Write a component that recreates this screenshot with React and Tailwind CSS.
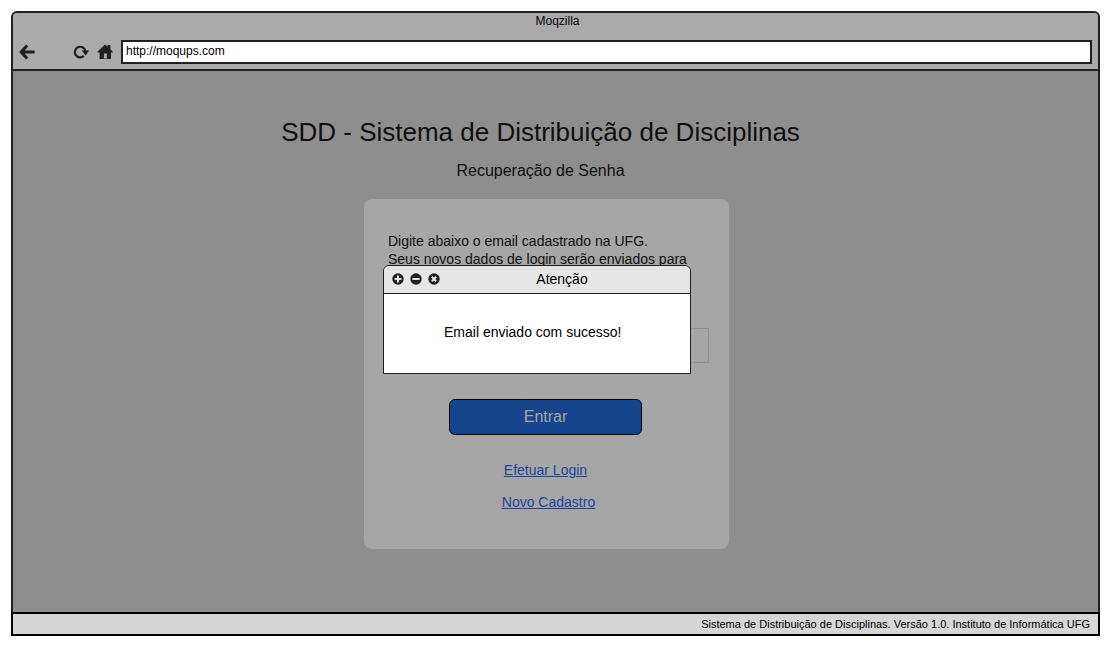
function BackIcon() {
  return (
    <svg width="16" height="16" viewBox="0 0 16 16" fill="none" stroke="#231f20" strokeWidth="3" aria-hidden="true">
      <path d="M2.4 8H15.6M8.2 1.4L2.2 8L8.2 14.6" />
    </svg>
  );
}

function ReloadIcon() {
  return (
    <svg width="16" height="16" viewBox="0 0 16 16" aria-hidden="true">
      <path d="M10.8 11.9A5.3 5.3 0 1 1 12.4 7.4" fill="none" stroke="#231f20" strokeWidth="2.2" />
      <path d="M8.8 6.4H16L12.6 11.4Z" fill="#231f20" />
    </svg>
  );
}

function HomeIcon() {
  return (
    <svg width="16" height="16" viewBox="0 0 16 16" fill="#231f20" aria-hidden="true">
      <path d="M8 .6L10.4 2.7V1H13.4V5.3L15.6 7.4V8.4H14V15H9.9V9.4H6.9V15H2.6V8.4H.6V7.4Z" />
      <path d="M6.9 14H9.9V15H6.9Z" fill="#666" />
    </svg>
  );
}

function RoundIcon({ d }) {
  return (
    <svg width="12" height="12" viewBox="0 0 12 12" aria-hidden="true">
      <circle cx="6" cy="6" r="5.7" fill="#231f20" />
      <path d={d} stroke="#e6e6e6" strokeWidth="2" />
    </svg>
  );
}

function Dialog() {
  return (
    <section
      role="dialog"
      aria-labelledby="dialog-title"
      className="absolute top-[66px] left-[19px] w-[308px] rounded-t-md border border-[#231f20] bg-white text-sm text-black"
    >
      <header className="flex h-7 items-center rounded-t-md border-b border-[#231f20] bg-[#e6e6e6] pb-0.5 pl-2">
        <div className="flex gap-1.5">
          <button type="button" aria-label="Maximizar"><RoundIcon d="M6 2.6V9.4M2.6 6H9.4" /></button>
          <button type="button" aria-label="Minimizar"><RoundIcon d="M2.4 6H9.6" /></button>
          <button type="button" aria-label="Fechar"><RoundIcon d="M3.8 3.8L8.2 8.2M8.2 3.8L3.8 8.2" /></button>
        </div>
        <h3 id="dialog-title" className="flex-1 pr-1.5 text-center">Atenção</h3>
      </header>
      <p className="px-15 pt-7 pb-[31px] leading-5">Email enviado com sucesso!</p>
    </section>
  );
}

export default function App() {
  return (
    <div className="flex min-h-screen flex-col bg-white p-[11px] font-['Liberation_Sans',Arial,sans-serif] text-[#0f0f0f]">
      <div className="flex flex-1 flex-col rounded-t-md border-2 border-b-0 border-[#231f20] bg-[#8e8e8e]">
        <header className="rounded-t-sm border-b-2 border-[#231f20] bg-[#aaaaaa] pb-[5px] text-xs text-black">
          <div className="h-[27px] pl-1 text-center leading-4">Moqzilla</div>
          <div className="flex items-center px-1.5">
            <button type="button" aria-label="Voltar"><BackIcon /></button>
            <button type="button" aria-label="Recarregar" className="ml-[38px]"><ReloadIcon /></button>
            <button type="button" aria-label="Início" className="ml-2"><HomeIcon /></button>
            <input
              type="text"
              aria-label="Endereço"
              defaultValue="http://moqups.com"
              className="ml-2 h-6 min-w-0 flex-1 border-2 border-[#231f20] bg-white px-[3px] pb-0.5 outline-none"
            />
          </div>
        </header>

        <main className="flex flex-1 flex-col items-center pt-[45px]">
          <div className="pr-[30px] text-center">
            <h1 className="text-[26px] leading-8">SDD - Sistema de Distribuição de Disciplinas</h1>
            <h2 className="mt-[11px] text-base leading-6">Recuperação de Senha</h2>
          </div>
          <div className="mt-4 pr-[18px]">
            <form className="relative flex h-[350px] w-[365px] flex-col rounded-lg bg-[#a6a6a6] px-6 pt-[33px] text-sm">
              <label htmlFor="email" className="h-24 leading-[18px]">
                Digite abaixo o email cadastrado na UFG.
                <br />
                Seus novos dados de login serão enviados para
              </label>
              <input
                id="email"
                type="email"
                className="h-[35px] w-[321px] border border-[#8e8e8e] bg-transparent px-2 outline-none"
              />
              <div className="flex flex-col items-center pt-9 pr-0.5">
                <button type="button" className="h-9 w-[193px] rounded-md border border-black bg-[#15458c] text-base text-[#a6a6a6]">
                  Entrar
                </button>
                <a href="#login" className="mt-[25px] leading-5 text-[#1c449c] underline">Efetuar Login</a>
                <a href="#cadastro" className="mt-3 ml-1.5 leading-5 text-[#1c449c] underline">Novo Cadastro</a>
              </div>
              <Dialog />
            </form>
          </div>
        </main>
      </div>
      <footer className="border-2 border-black bg-[#d6d6d6] px-2 text-right text-[11px] leading-5 text-black">
        Sistema de Distribuição de Disciplinas. Versão 1.0. Instituto de Informática UFG
      </footer>
    </div>
  );
}
